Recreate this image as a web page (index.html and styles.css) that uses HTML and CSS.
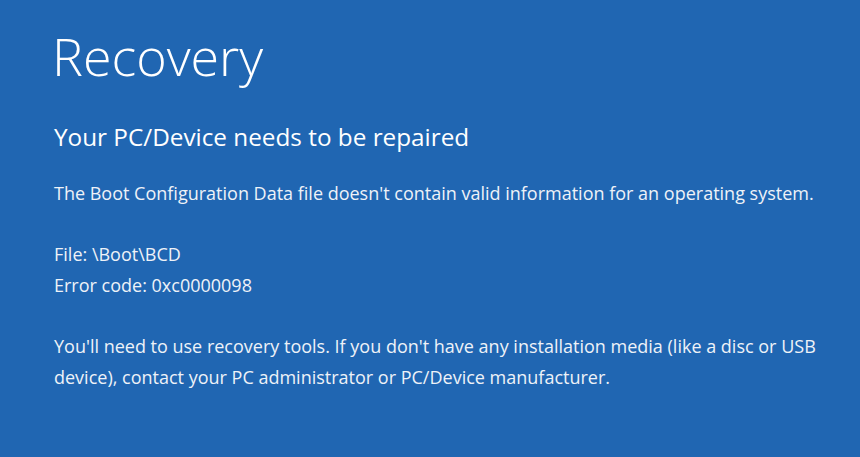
FILE: index.html
```html
<!DOCTYPE html>
<html lang="en">
<head>
<meta charset="utf-8">
<title>Recovery</title>
<link rel="stylesheet" href="styles.css">
</head>
<body>
<main class="screen">
  <h1 class="title">Recovery</h1>
  <h2 class="subtitle">Your PC/Device needs to be repaired</h2>
  <p class="text">The Boot Configuration Data file doesn't contain valid information for an operating system.</p>
  <p class="text">File: \Boot\BCD<br>Error code: 0xc0000098</p>
  <p class="text">You'll need to use recovery tools. If you don't have any installation media (like a disc or USB device), contact your PC administrator or PC/Device manufacturer.</p>
</main>
</body>
</html>
```
FILE: styles.css
```css
html, body {
  margin: 0;
  padding: 0;
  background: #2066b2;
}
.screen {
  width: 860px;
  height: 457px;
  box-sizing: border-box;
  padding: 18px 28px 0 54px;
  color: #ffffff;
  font-family: "Open Sans", "Noto Sans", sans-serif;
  overflow: hidden;
}
.title {
  margin: 0 0 0 -2px;
  font-size: 52px;
  font-weight: 300;
  line-height: 76px;
}
.subtitle {
  margin: 26px 0 0 0;
  font-size: 24.3px;
  font-weight: 400;
  line-height: 34px;
}
.text {
  margin: 24px 0 0 0;
  font-size: 18px;
  line-height: 31px;
  color: #eef2f8;
}
.text + .text {
  margin-top: 30px;
}
```
